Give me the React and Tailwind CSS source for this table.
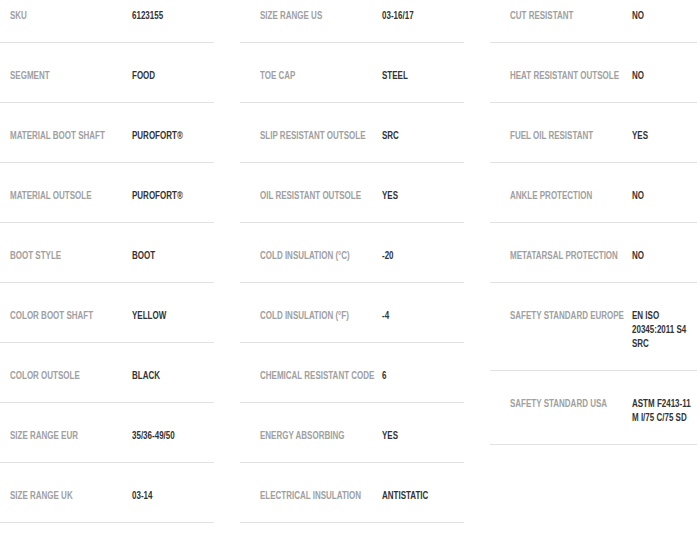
import React from "react";

// spec table, three columns of label / value rows
const columns = [
  {
    width: "w-[224px]",
    rows: [
      ["SKU", "6123155"],
      ["SEGMENT", "FOOD"],
      ["MATERIAL BOOT SHAFT", "PUROFORT®"],
      ["MATERIAL OUTSOLE", "PUROFORT®"],
      ["BOOT STYLE", "BOOT"],
      ["COLOR BOOT SHAFT", "YELLOW"],
      ["COLOR OUTSOLE", "BLACK"],
      ["SIZE RANGE EUR", "35/36-49/50"],
      ["SIZE RANGE UK", "03-14"],
    ],
  },
  {
    width: "w-[224px]",
    rows: [
      ["SIZE RANGE US", "03-16/17"],
      ["TOE CAP", "STEEL"],
      ["SLIP RESISTANT OUTSOLE", "SRC"],
      ["OIL RESISTANT OUTSOLE", "YES"],
      ["COLD INSULATION (°C)", "-20"],
      ["COLD INSULATION (°F)", "-4"],
      ["CHEMICAL RESISTANT CODE", "6"],
      ["ENERGY ABSORBING", "YES"],
      ["ELECTRICAL INSULATION", "ANTISTATIC"],
    ],
  },
  {
    width: "w-[207px]",
    rows: [
      ["CUT RESISTANT", "NO"],
      ["HEAT RESISTANT OUTSOLE", "NO"],
      ["FUEL OIL RESISTANT", "YES"],
      ["ANKLE PROTECTION", "NO"],
      ["METATARSAL PROTECTION", "NO"],
      ["SAFETY STANDARD EUROPE", "EN ISO\n20345:2011 S4\nSRC"],
      ["SAFETY STANDARD USA", "ASTM F2413-11\nM I/75 C/75 SD"],
    ],
  },
];

const App = () => {
  return (
    <div
      className="w-[700px] h-[536px] overflow-hidden bg-white"
      style={{ fontFamily: '"Liberation Sans", Arial, sans-serif' }}
    >
      <div className="flex gap-[26px] -ml-[10px] -mt-[17px]">
        {columns.map((col, ci) => (
          <div key={ci} className={`${col.width} shrink-0 flex flex-col`}>
            {col.rows.map(([label, value]) => (
              <div
                key={label}
                className="flex items-start pl-[20px] pt-[26px] pb-[19px] border-b border-[#e2e2e2] text-[10px] leading-[14px] font-bold"
              >
                <div className="w-[122px] shrink-0 text-[#a0a0a0] whitespace-nowrap origin-left scale-x-[0.8]">
                  {label}
                </div>
                <div className="flex-1 text-[#333333] whitespace-pre origin-left scale-x-[0.8]">
                  {value}
                </div>
              </div>
            ))}
          </div>
        ))}
      </div>
    </div>
  );
};

export default App;
